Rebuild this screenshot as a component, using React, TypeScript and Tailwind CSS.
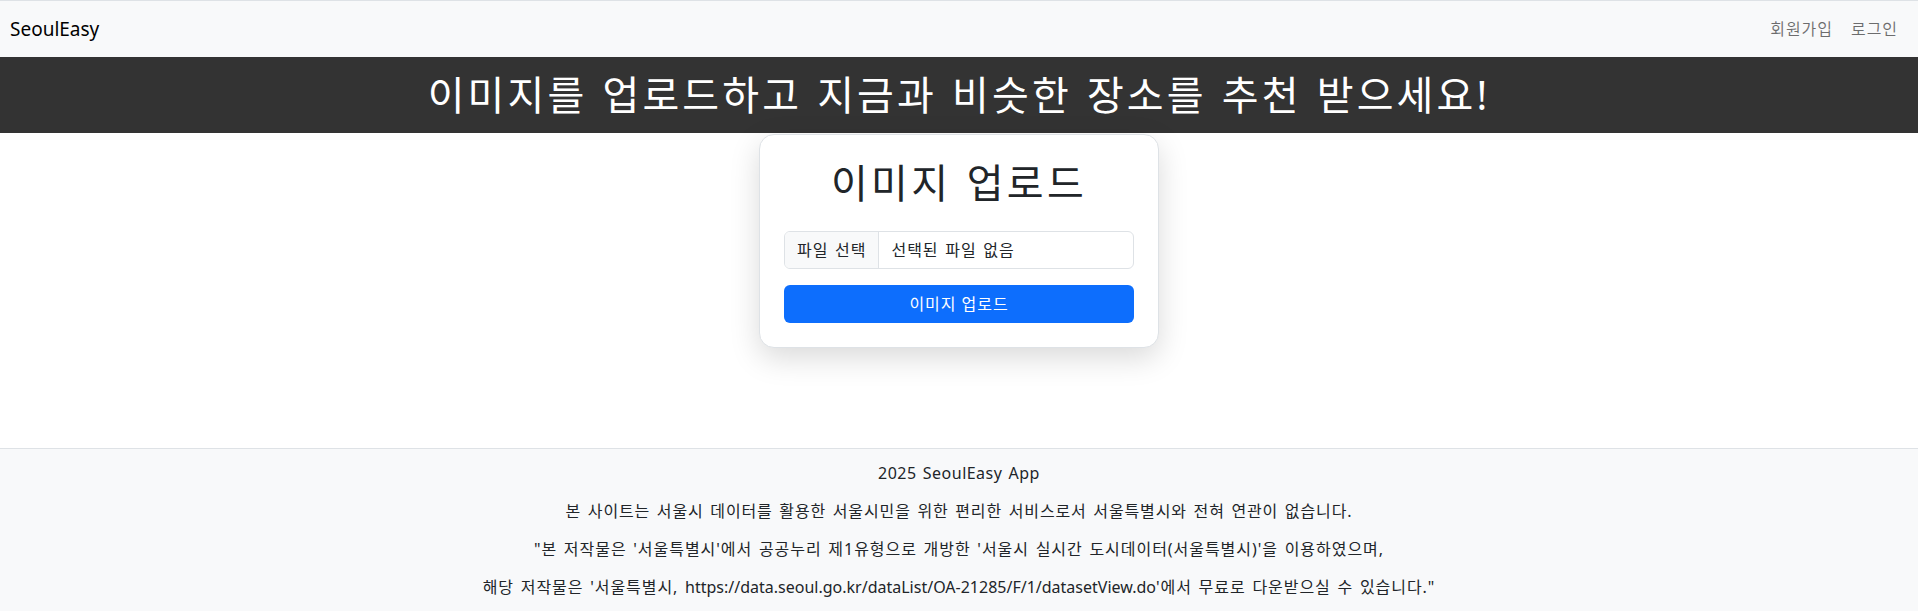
import React from "react";

const font = "font-['Noto_Sans','Noto_Sans_CJK_KR',sans-serif]";

function Navbar() {
  return (
    <nav className="flex h-[57px] items-center justify-between border-t border-[#dee2e6] bg-[#f8f9fa] pl-[10px] pr-[20px]">
      <a className="text-[19px] tracking-normal text-black">SeoulEasy</a>
      <div className="flex items-center gap-[18px] text-[16px] text-[#00000090]">
        <a>회원가입</a>
        <a>로그인</a>
      </div>
    </nav>
  );
}

function UploadCard() {
  return (
    <div className="w-[400px] rounded-[15px] border border-[#dee2e6] bg-white p-6 shadow-[0_10px_30px_rgba(0,0,0,0.15)]">
      <h1 className="mb-6 text-center text-[40px] leading-[48px] tracking-[0.083em] text-[#212529]">
        이미지 업로드
      </h1>
      {/* file input */}
      <div className="flex h-[38px] overflow-hidden rounded-md border border-[#dee2e6] text-[16px] text-[#212529]">
        <span className="flex items-center border-r border-[#dee2e6] bg-[#f8f9fa] px-3">
          파일 선택
        </span>
        <span className="flex items-center pl-3">선택된 파일 없음</span>
      </div>
      <button className="mt-4 h-[38px] w-full rounded-md bg-[#0d6efd] text-[16px] text-white">
        이미지 업로드
      </button>
    </div>
  );
}

function Footer() {
  return (
    <footer className="flex flex-col items-center gap-[14px] border-t border-[#dee2e6] bg-[#f8f9fa] py-3 text-[16px] leading-6 text-[#212529]">
      <p className="tracking-[0.03em]">2025 SeoulEasy App</p>
      <p className="tracking-[0.055em]">
        본 사이트는 서울시 데이터를 활용한 서울시민을 위한 편리한 서비스로서
        서울특별시와 전혀 연관이 없습니다.
      </p>
      <p>
        "본 저작물은 '서울특별시'에서 공공누리 제1유형으로 개방한 '서울시
        실시간 도시데이터(서울특별시)'을 이용하였으며,
      </p>
      <p>
        해당 저작물은 '서울특별시,{" "}
        <span className="tracking-normal">
          https://data.seoul.go.kr/dataList/OA-21285/F/1/datasetView.do
        </span>
        '에서 무료로 다운받으실 수 있습니다."
      </p>
    </footer>
  );
}

export default function App() {
  return (
    <div
      className={`${font} min-h-screen bg-white tracking-[0.06em] [word-spacing:0.1em]`}
    >
      <Navbar />
      <div className="flex h-[76px] items-center justify-center bg-[#333333]">
        <h2 className="text-[40px] leading-[48px] tracking-[0.078em] text-white">
          이미지를 업로드하고 지금과 비슷한 장소를 추천 받으세요!
        </h2>
      </div>
      <main className="flex h-[315px] items-start justify-center pt-px">
        <UploadCard />
      </main>
      <Footer />
    </div>
  );
}
